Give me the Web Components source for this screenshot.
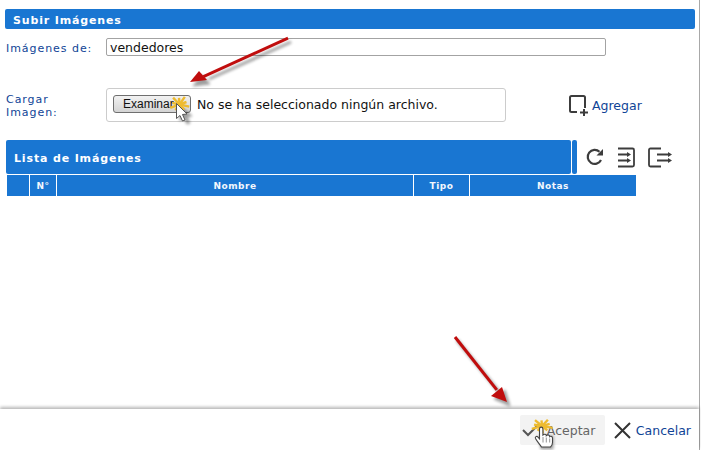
<!DOCTYPE html>
<html lang="es">
<head>
<meta charset="utf-8">
<title>Subir Imágenes</title>
<style>
html,body{margin:0;padding:0;background:#fff;}
body{width:701px;height:450px;overflow:hidden;font-family:"DejaVu Sans",sans-serif;}
</style>
</head>
<body>
<upload-page></upload-page>

<script>
class BlueBar extends HTMLElement{
    constructor(){
        super()
        this.attachShadow({mode: 'open'})
        this.shadowRoot.innerHTML = `
            <style>
                :host{
                    display: flex;
                    align-items: center;
                    box-sizing: border-box;
                    background: #1976d2;
                    border-radius: 2px;
                    color: #fff;
                    font: bold 11px "DejaVu Sans", sans-serif;
                    letter-spacing: .85px;
                    padding: 2px 0 0 8px;
                }
            </style>
            <slot></slot>
        `
    }
}

class FormRow extends HTMLElement{
    constructor(){
        super()
        this.attachShadow({mode: 'open'})
        this.shadowRoot.innerHTML = `
            <style>
                :host{
                    display: flex;
                    align-items: center;
                }
                #label{
                    width: 100px;
                    flex: none;
                    padding-top: 2px;
                    color: #0f4496;
                    font: 11px/13px "DejaVu Sans", sans-serif;
                    letter-spacing: .95px;
                    white-space: pre-line;
                }
            </style>
            <div id="label"></div>
            <slot></slot>
        `
    }
    connectedCallback(){
        this.shadowRoot.querySelector('#label').textContent = this.getAttribute('label')
    }
}

class FilePick extends HTMLElement{
    constructor(){
        super()
        this.attachShadow({mode: 'open'})
        this.shadowRoot.innerHTML = `
            <style>
                :host{
                    display: flex;
                    align-items: center;
                    box-sizing: border-box;
                    width: 400px;
                    height: 34px;
                    padding: 0 0 2px 6px;
                    border: 1px solid #ccc;
                    border-radius: 3px;
                    color: #111;
                    font: 12.5px "DejaVu Sans", sans-serif;
                }
                #btn{
                    box-sizing: border-box;
                    width: 78px;
                    height: 18px;
                    margin-right: 6px;
                    border: 1px solid #6f6f6f;
                    border-radius: 3px;
                    background: linear-gradient(#f2f2f2, #d4d4d4);
                    color: #111;
                    font: 12px/16px "Liberation Sans", sans-serif;
                    padding-left: 9px;
                }
            </style>
            <div id="btn">Examinar</div>
            <span>No se ha seleccionado ningún archivo.</span>
        `
    }
}

class IconLink extends HTMLElement{
    constructor(){
        super()
        this.attachShadow({mode: 'open'})
        this.shadowRoot.innerHTML = `
            <style>
                :host{
                    display: inline-flex;
                    align-items: center;
                    color: #0f4496;
                    font: 12.5px "DejaVu Sans", sans-serif;
                }
                ::slotted(svg){
                    flex: none;
                }
            </style>
            <slot name="icon"></slot>
            <slot></slot>
        `
    }
}

class ListHead extends HTMLElement{
    constructor(){
        super()
        this.attachShadow({mode: 'open'})
        this.shadowRoot.innerHTML = `
            <style>
                :host{
                    display: grid;
                    grid-template-columns: 23px 27px 357px 56px 167px;
                    width: 630px;
                    height: 21px;
                    background: #1976d2;
                    color: #f2f7fd;
                    font: bold 9px/22px "DejaVu Sans", sans-serif;
                    letter-spacing: .5px;
                    text-align: center;
                }
                div{
                    border-left: 1px solid #fff;
                }
                div:first-child{
                    border-left: 0;
                }
            </style>
            <div></div>
            <div>N°</div>
            <div>Nombre</div>
            <div>Tipo</div>
            <div>Notas</div>
        `
    }
}

class FootBar extends HTMLElement{
    constructor(){
        super()
        this.attachShadow({mode: 'open'})
        this.shadowRoot.innerHTML = `
            <style>
                :host{
                    display: flex;
                    justify-content: flex-end;
                    align-items: center;
                    box-sizing: border-box;
                    height: 41px;
                    padding: 1px 8px 0 0;
                    background: #fff;
                    box-shadow: 0 -2px 3px rgba(0,0,0,.28);
                    font: 12.5px "DejaVu Sans", sans-serif;
                }
                #ok{
                    display: flex;
                    align-items: center;
                    box-sizing: border-box;
                    width: 85px;
                    height: 30px;
                    padding-left: 2px;
                    margin-right: 9px;
                    background: #f3f3f3;
                    border-radius: 2px;
                    color: #666;
                }
                #ok svg{
                    margin-right: 7px;
                }
                #cancel{
                    display: flex;
                    align-items: center;
                    color: #0f4496;
                }
                #cancel svg{
                    margin-right: 5px;
                }
            </style>
            <div id="ok">
                <svg width="18" height="14" viewBox="0 0 18 14" fill="none" stroke="#555" stroke-width="2"><path d="M1 7l5 5L17 1"/></svg>
                <span>Aceptar</span>
            </div>
            <div id="cancel">
                <svg width="17" height="17" viewBox="0 0 17 17" fill="none" stroke="#333" stroke-width="2"><path d="M1 1l15 15M16 1L1 16"/></svg>
                <span>Cancelar</span>
            </div>
        `
    }
}

class MarkUps extends HTMLElement{
    constructor(){
        super()
        this.attachShadow({mode: 'open'})
        const star = (cx, cy, rx, ry) => {
            let rays = ''
            for(let i = 0; i < 10; i++){
                const a = i * Math.PI / 5 + .25
                const k = i % 2 ? .75 : 1
                rays += `<path d="M${cx} ${cy}L${(cx + Math.cos(a) * rx * k).toFixed(1)} ${(cy + Math.sin(a) * ry * k).toFixed(1)}"/>`
            }
            return `<g stroke="#eebb30" stroke-width="2.4">${rays}</g>`
        }
        this.shadowRoot.innerHTML = `
            <style>
                :host{
                    position: absolute;
                    left: 0;
                    top: 0;
                    display: block;
                    pointer-events: none;
                }
                svg{
                    display: block;
                }
            </style>
            <svg width="701" height="450" viewBox="0 0 701 450">
                <defs>
                    <filter id="soft" x="-30%" y="-30%" width="170%" height="170%">
                        <feGaussianBlur stdDeviation="1.5"/>
                    </filter>
                </defs>
                <g fill="#000" stroke="#000" opacity=".38" filter="url(#soft)">
                    <path d="M291 42L209 79" stroke-width="3"/>
                    <path d="M193 86L202 75L210 84Z"/>
                    <path d="M457 340L500 393" stroke-width="3"/>
                    <path d="M510 406L494 399L505 390Z"/>
                    <path d="M180 106l0 15 4-3 3 6 3-1-3-6 5-1Z"/>
                    <path d="M539 436h14v13h-12Z"/>
                </g>
                <g fill="#c00d0d" stroke="none">
                    <path d="M288.600 39.500L204 78L202.800 75.200L287.400 36.700Z"/>
                    <path d="M190 82L199 71L207 80Z"/>
                    <path d="M456.200 336L498 389L495.600 390.800L453.800 338Z"/>
                    <path d="M507 402L491 396L502 387Z"/>
                </g>
                ${star(179.5, 104.5, 10, 9)}
                ${star(542, 426, 11, 7.5)}
                <path d="M176.500 103.500v15l3.500-3 2.500 5.500 2.500-1-2.500-5.500 4.500-.5Z" fill="#fff" stroke="#555" stroke-width="1"/>
                <path d="M539.500 429c0-2.500 3.400-2.500 3.400 0v6c1.200-1.200 3.400-1 3.400.6 1.200-1.200 3.400-.6 3.400 1 1.200-.9 2.800 0 2.800 1.400v4.500c0 2-1 3.500-2 4.500h-9c-1.200-2.200-4.500-5.500-6-8.500-.8-1.700 1.200-2.800 2.300-1.700l1.700 2Z" fill="#fff" stroke="#444" stroke-width="1.100"/>
                <path d="M543 437v5.500M546.300 437.500v5M549.700 438.500v4" stroke="#888" stroke-width=".9"/>
            </svg>
        `
    }
}

class UploadPage extends HTMLElement{
    constructor(){
        super()
        this.attachShadow({mode: 'open'})
        this.shadowRoot.innerHTML = `
            <style>
                :host{
                    position: relative;
                    display: flex;
                    flex-direction: column;
                    box-sizing: border-box;
                    width: 700px;
                    height: 450px;
                    border-right: 1px solid #a8a8a8;
                }
                #top{
                    flex: 1;
                    min-height: 0;
                    padding: 9px 4px 0 5px;
                }
                #title{
                    height: 20px;
                    width: 690px;
                }
                #who{
                    margin: 9px 0 0 1px;
                    height: 18px;
                }
                #name{
                    box-sizing: border-box;
                    width: 500px;
                    height: 18px;
                    padding-left: 3px;
                    border: 1px solid #a3a3a3;
                    border-radius: 2px;
                    color: #111;
                    font: 12.5px/17px "DejaVu Sans", sans-serif;
                }
                #load{
                    margin: 32px 0 0 1px;
                }
                #add{
                    margin-left: 63px;
                }
                #add svg{
                    margin-right: 4px;
                    margin-top: 1px;
                }
                #list{
                    display: flex;
                    align-items: center;
                    margin: 18px 0 1px 1px;
                }
                #listbar{
                    width: 565px;
                    height: 34px;
                }
                #tick{
                    width: 5px;
                    height: 34px;
                    margin: 0 9px 0 1px;
                    border-radius: 2px;
                    background: #1976d2;
                }
                #tools{
                    display: flex;
                    align-items: center;
                    gap: 13px;
                }
                list-head{
                    margin-left: 1px;
                }
            </style>
            <div id="top">
                <blue-bar id="title">Subir Imágenes</blue-bar>
                <form-row id="who" label="Imágenes de:">
                    <div id="name">vendedores</div>
                </form-row>
                <form-row id="load" label="Cargar&#10;Imagen:">
                    <file-pick></file-pick>
                    <icon-link id="add">
                        <svg slot="icon" width="19" height="21" viewBox="0 0 19 21" fill="none" stroke="#3c3c3c" stroke-width="2">
                            <path d="M8 17H2.500Q1 17 1 15.500V2.500Q1 1 2.500 1H14.500Q16 1 16 2.500V13"/>
                            <path d="M15 14v7M11 17.500h8"/>
                        </svg>
                        Agregar
                    </icon-link>
                </form-row>
                <div id="list">
                    <blue-bar id="listbar">Lista de Imágenes</blue-bar>
                    <div id="tick"></div>
                    <div id="tools">
                        <svg width="18" height="18" viewBox="0 0 18 18" fill="none" stroke="#3c3c3c" stroke-width="2.200">
                            <path d="M15 12A7 7 0 1 1 13.500 3.800"/>
                            <path d="M10.500 7.500H17V1Z" fill="#3c3c3c" stroke="none"/>
                        </svg>
                        <svg width="18" height="21" viewBox="0 0 18 21" fill="none" stroke="#3c3c3c" stroke-width="1.800">
                            <path d="M1 1.500H15.500Q17 1.500 17 3V18Q17 19.500 15.500 19.500H1"/>
                            <path d="M1 7.500H10M1 13.500H10"/>
                            <path d="M10 5l4 2.500-4 2.500ZM10 11l4 2.500-4 2.500Z" fill="#3c3c3c" stroke="none"/>
                        </svg>
                        <svg width="24" height="21" viewBox="0 0 24 21" fill="none" stroke="#3c3c3c" stroke-width="1.800">
                            <path d="M13 1.500H2.500Q1 1.500 1 3V18Q1 19.500 2.500 19.500H13"/>
                            <path d="M9 7.500H20M9 13.500H20"/>
                            <path d="M20 5l4 2.500-4 2.500ZM20 11l4 2.500-4 2.500Z" fill="#3c3c3c" stroke="none"/>
                        </svg>
                    </div>
                </div>
                <list-head></list-head>
            </div>
            <foot-bar></foot-bar>
            <mark-ups></mark-ups>
        `
    }
}

customElements.define('blue-bar', BlueBar)
customElements.define('form-row', FormRow)
customElements.define('file-pick', FilePick)
customElements.define('icon-link', IconLink)
customElements.define('list-head', ListHead)
customElements.define('foot-bar', FootBar)
customElements.define('mark-ups', MarkUps)
customElements.define('upload-page', UploadPage)
</script>
</body>
</html>
